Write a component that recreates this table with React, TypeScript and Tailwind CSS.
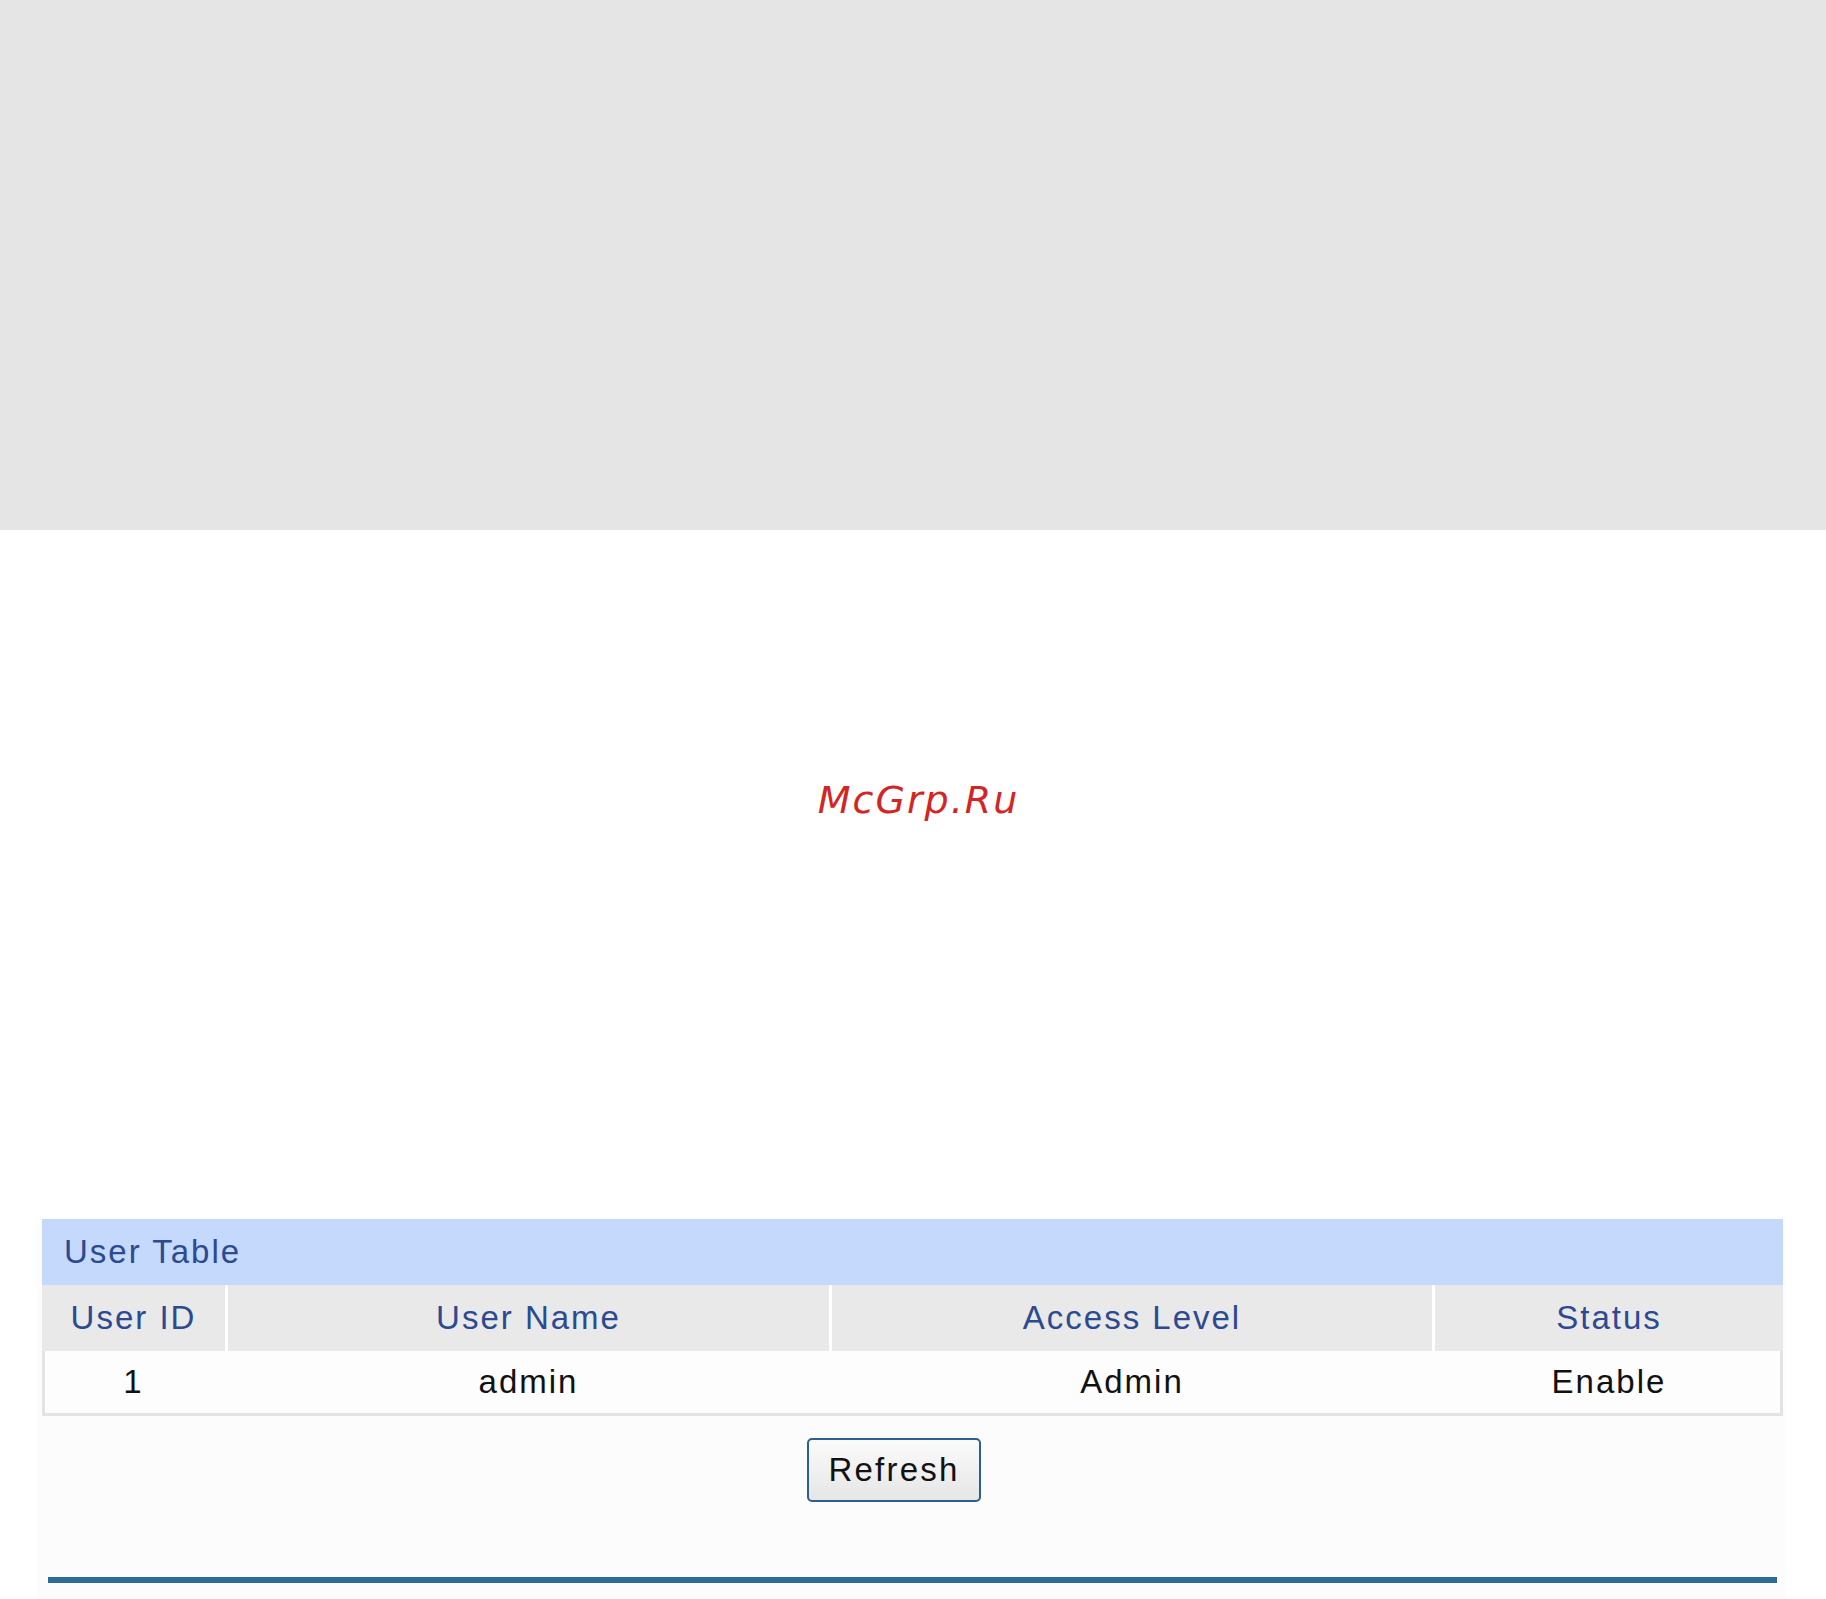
import React from 'react';

const columns = [
    { key: 'id', label: 'User ID', width: 'w-[183px]' },
    { key: 'name', label: 'User Name', width: 'w-[601px]' },
    { key: 'level', label: 'Access Level', width: 'w-[600px]' },
    { key: 'status', label: 'Status', width: 'w-[348px]' },
];

const users = [{ id: '1', name: 'admin', level: 'Admin', status: 'Enable' }];

/**
 * User table panel with header, rows and refresh button
 */
function UserTable() {
    return (
        <div className="ml-[37px] w-[1749px] bg-[#fcfcfc] pb-[16px]">
            <div className="ml-[5px] w-[1741px] tracking-[2px] text-[33px] font-['Liberation_Sans',Arial,sans-serif]">
                <div className="flex h-[66px] items-center bg-[#c5d9fc] pl-[22px] text-[#2c4a92]">
                    User Table
                </div>
                <div className="flex h-[66px] gap-[3px] bg-white">
                    {columns.map((col) => (
                        <div
                            key={col.key}
                            className={`${col.width} flex items-center justify-center bg-[#e9e9e9] text-[#2c4a92]`}
                        >
                            {col.label}
                        </div>
                    ))}
                </div>
                {users.map((user) => (
                    <div
                        key={user.id}
                        className="flex h-[65px] gap-[3px] bg-[#fdfdfd] pb-[3px] text-[#111] shadow-[inset_3px_-3px_0_#e3e3e3,inset_-3px_0_0_#e3e3e3]"
                    >
                        <div className="flex w-[183px] items-center justify-center">{user.id}</div>
                        <div className="flex w-[601px] items-center justify-center">{user.name}</div>
                        <div className="flex w-[600px] items-center justify-center">{user.level}</div>
                        <div className="flex w-[348px] items-center justify-center">{user.status}</div>
                    </div>
                ))}
            </div>
            <div className="mt-[22px] flex justify-center pr-[35px]">
                <button className="h-[64px] w-[174px] rounded-[5px] border-2 border-[#2c5f8f] bg-gradient-to-b from-[#fbfbfb] to-[#e6e6e6] text-[33px] tracking-[2.2px] text-[#111] font-['Liberation_Sans',Arial,sans-serif]">
                    Refresh
                </button>
            </div>
            <div className="ml-[11px] mt-[75px] h-[6px] w-[1729px] bg-[#2e6a97]" />
        </div>
    );
}

export default function App() {
    return (
        <div className="min-h-[1599px] w-[1826px] bg-white">
            <div className="h-[530px] bg-[#e5e5e5]" />
            <div className="flex h-[689px] justify-center pl-[11px] pt-[251px]">
                <span className="text-[38px] leading-none italic tracking-[2px] text-[#d42525] font-['DejaVu_Sans',sans-serif]">
                    McGrp.Ru
                </span>
            </div>
            <UserTable />
        </div>
    );
}
